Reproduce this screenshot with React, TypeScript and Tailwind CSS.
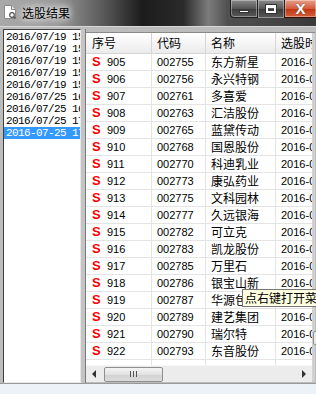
import React from 'react'

const stocks = [
  ['905', '002755', '东方新星'],
  ['906', '002756', '永兴特钢'],
  ['907', '002761', '多喜爱'],
  ['908', '002763', '汇洁股份'],
  ['909', '002765', '蓝黛传动'],
  ['910', '002768', '国恩股份'],
  ['911', '002770', '科迪乳业'],
  ['912', '002773', '康弘药业'],
  ['913', '002775', '文科园林'],
  ['914', '002777', '久远银海'],
  ['915', '002782', '可立克'],
  ['916', '002783', '凯龙股份'],
  ['917', '002785', '万里石'],
  ['918', '002786', '银宝山新'],
  ['919', '002787', '华源包装'],
  ['920', '002789', '建艺集团'],
  ['921', '002790', '瑞尔特'],
  ['922', '002793', '东音股份'],
]

const times = [
  '2016/07/19 15:01',
  '2016/07/19 15:05',
  '2016/07/19 15:10',
  '2016/07/19 15:20',
  '2016/07/19 15:30',
  '2016/07/25 16:01',
  '2016/07/25 16:30',
  '2016/07/25 17:00',
  '2016-07-25 17:20',
]

const sans = { fontFamily: '"Liberation Sans", "Noto Sans CJK SC", sans-serif' }
const cjk = { fontFamily: '"Noto Sans CJK SC", "Liberation Sans", sans-serif' }

function TitleBar() {
  return (
    <div className="relative h-[26px] shrink-0 bg-[linear-gradient(to_right,#a9a9a9_0%,#9a9a9a_18%,#5c5c5c_32%,#1c1c1c_45%,#2a2a2a_58%,#7c7c7c_66%,#505050_72%,#3a3a3a_100%)] flex items-start">
      <svg width="14" height="16" viewBox="0 0 14 16" className="mt-[4px] ml-[3px] shrink-0">
        <path d="M1.5 1.5h7l4 4v9h-11z" fill="#fff" stroke="#8a8a8a" />
        <path d="M8.5 1.5v4h4" fill="#e6e6e6" stroke="#8a8a8a" />
        <circle cx="9" cy="11" r="2.3" fill="none" stroke="#555" strokeWidth="1.2" />
        <path d="M10.6 12.6l1.8 1.8" stroke="#555" strokeWidth="1.4" />
      </svg>
      <div
        className="ml-[5px] mt-[5px] text-[12px] leading-[16px] text-black [text-shadow:0_0_6px_#fff,0_0_10px_#fff]"
        style={cjk}
      >
        选股结果
      </div>
      <div className="absolute left-[230px] top-0 flex h-[18px]">
        <div className="w-[28px] h-[18px] rounded-bl-[4px] border border-t-0 border-[#1e1e1e] bg-[linear-gradient(#8a8a8a,#555_50%,#3c3c3c_51%,#5a5a5a)] shadow-[inset_0_0_0_1px_rgba(255,255,255,0.35)] flex items-end justify-center pb-[4px]">
          <div className="w-[10px] h-[3px] bg-white border border-[#333]" />
        </div>
        <div className="w-[27px] h-[18px] border-y-0 border-r border-[#1e1e1e] bg-[linear-gradient(#8a8a8a,#555_50%,#3c3c3c_51%,#5a5a5a)] shadow-[inset_0_0_0_1px_rgba(255,255,255,0.35)] flex items-center justify-center">
          <div className="w-[10px] h-[8px] border-2 border-t-[3px] border-white outline outline-1 outline-[#333]" />
        </div>
        <div className="w-[31px] h-[18px] border-r-0 border-b border-[#3a0a00] bg-[linear-gradient(#e7a08c,#d45a3e_50%,#c2330f_51%,#d2603c)] shadow-[inset_0_0_0_1px_rgba(255,255,255,0.35)] flex items-center justify-center">
          <span className="text-white text-[15px] font-bold leading-none [text-shadow:0_0_1px_#333]" style={sans}>
            X
          </span>
        </div>
      </div>
    </div>
  )
}

function LeftList() {
  return (
    <div className="w-[78px] h-[354px] bg-white border border-t-[#404040] border-l-[#404040] border-r-[#e8e8e8] border-b-[#e8e8e8] pt-[1px] overflow-hidden">
      {times.map((t, i) => (
        <div
          key={i}
          className={
            'h-[12px] pl-[2px] whitespace-nowrap overflow-hidden text-[11px] leading-[12px] tracking-[-0.6px] ' +
            (i === times.length - 1 ? 'bg-[#3399ff] text-white' : 'text-black')
          }
          style={{ fontFamily: '"Liberation Mono", monospace' }}
        >
          {t}
        </div>
      ))}
    </div>
  )
}

function Grid() {
  return (
    <div className="relative w-[226px] flex flex-col bg-white overflow-hidden">
      <div className="flex h-[21px] shrink-0 border-b border-[#d5d5d5] bg-[linear-gradient(#ffffff,#f3f3f3_60%,#ebebeb)] text-[12px] leading-[20px] text-black" style={cjk}>
        <div className="w-[66px] shrink-0 pl-[6px] border-r border-[#d5d5d5]">序号</div>
        <div className="w-[54px] shrink-0 pl-[5px] border-r border-[#d5d5d5]">代码</div>
        <div className="w-[70px] shrink-0 pl-[5px] border-r border-[#d5d5d5]">名称</div>
        <div className="w-[100px] shrink-0 pl-[5px] whitespace-nowrap">选股时间</div>
      </div>
      <div className="h-[311px] overflow-hidden">
        {[...stocks, ['', '', '']].map(([no, code, name], i) => (
          <div key={i} className="flex h-[17px] border-b border-[#e4e4e4] text-black">
            <div className="w-[66px] shrink-0 pl-[6px] border-r border-[#e4e4e4] flex items-center">
              {no && (
                <>
                  <div className="w-[10px] shrink-0 text-[13px] font-bold text-[#ff0000] leading-[14px]" style={sans}>
                    S
                  </div>
                  <div className="ml-[5px] text-[11px] leading-[14px]" style={sans}>{no}</div>
                </>
              )}
            </div>
            <div className="w-[54px] shrink-0 pl-[5px] border-r border-[#e4e4e4] flex items-center text-[11px]" style={sans}>
              {code}
            </div>
            <div className="w-[70px] shrink-0 pl-[5px] border-r border-[#e4e4e4] flex items-center text-[12px] whitespace-nowrap" style={cjk}>
              {name}
            </div>
            <div className="w-[100px] shrink-0 pl-[5px] flex items-center text-[11px] whitespace-nowrap" style={sans}>
              {no ? '2016-07-25 17:20' : ''}
            </div>
          </div>
        ))}
      </div>
      <div className="h-[17px] shrink-0 flex items-center bg-[#ececec] border-t border-[#f8f8f8]">
        <div className="w-[17px] h-full flex items-center justify-center">
          <svg width="5" height="8" viewBox="0 0 5 8"><path d="M4 0v8L0 4z" fill="#333" /></svg>
        </div>
        <div className="w-[59px] h-[15px] ml-[1px] rounded-[2px] border border-[#8f8f8f] bg-[linear-gradient(#f4f4f4,#e2e2e2_50%,#d2d2d2_51%,#dcdcdc)] flex items-center justify-center gap-[1px]">
          <div className="w-[1px] h-[6px] bg-[#555]" />
          <div className="w-[1px] h-[6px] bg-[#555] ml-[1px]" />
          <div className="w-[1px] h-[6px] bg-[#555] ml-[1px]" />
        </div>
        <div className="flex-1" />
        <div className="w-[17px] h-full flex items-center justify-center">
          <svg width="5" height="8" viewBox="0 0 5 8"><path d="M1 0v8l4-4z" fill="#333" /></svg>
        </div>
      </div>
    </div>
  )
}

export default function App() {
  return (
    <div className="relative w-[316px] h-[394px] overflow-hidden flex flex-col bg-[#bcbcbc]">
      <TitleBar />
      <div className="flex-1 flex pl-[3px] pt-[2px] border-t border-[#d8d8d8]">
        <LeftList />
        <div className="w-[5px] shrink-0 bg-[#c4c4c4] border-r border-[#7a7a7a]" />
        <div className="flex flex-col pt-[3px]">
          <div className="border-t border-[#8a8a8a] flex">
            <Grid />
            <div className="w-[3px] bg-[#d0d0d0]" />
          </div>
        </div>
        <div className="absolute left-[313px] top-[331px] w-[6px] h-[14px] border border-[#8f8f8f] bg-[#e8e8e8] rounded-[2px]" />
      </div>
      <div className="h-[11px] shrink-0 border-t border-[#9a9a9a] bg-[#edf1f8]" />
      <div
        className="absolute left-[242px] top-[289px] h-[18px] pl-[2px] pr-[4px] border border-[#767676] bg-[#ffffe1] text-[12px] leading-[16px] text-black whitespace-nowrap"
        style={cjk}
      >
        点右键打开菜单
      </div>
    </div>
  )
}
